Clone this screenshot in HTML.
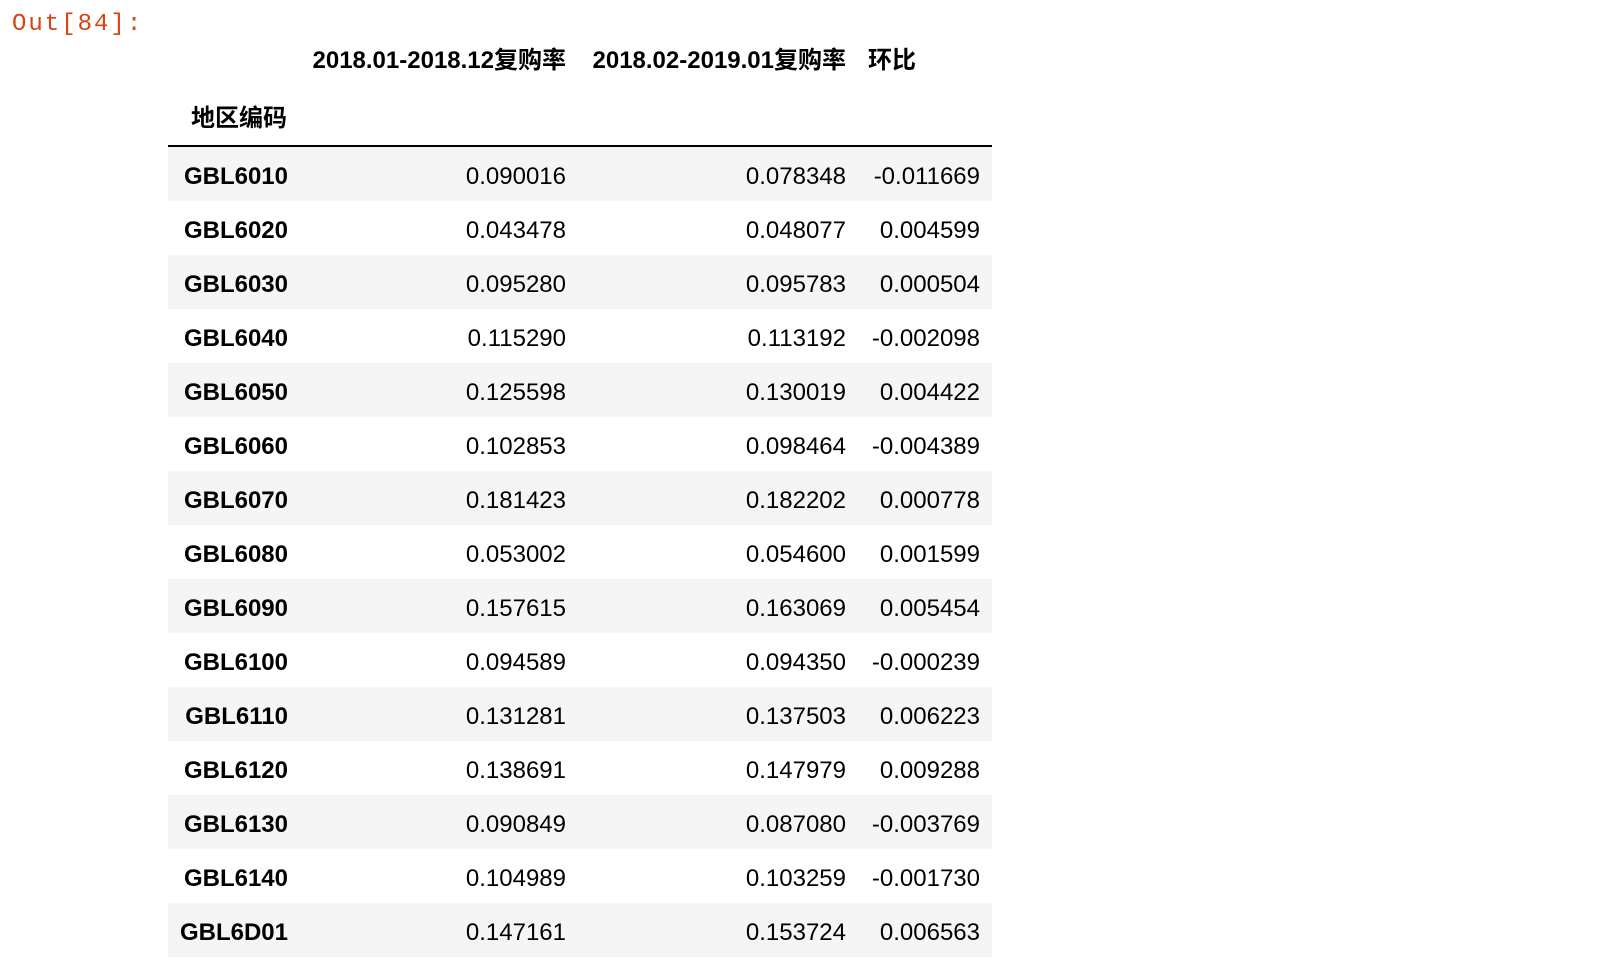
<!DOCTYPE html>
<html><head><meta charset="utf-8"><style>
body{margin:0;width:1600px;height:968px;background:#fff;position:relative;overflow:hidden;font-family:"Liberation Sans","Noto Sans CJK SC",sans-serif;font-size:24px;color:#000}
.out{position:absolute;left:12px;top:11px;line-height:28px;font-family:"Liberation Mono",monospace;color:#d84315;font-size:24px;letter-spacing:2px}
.r{position:absolute;left:168px;width:824px;height:54px}
.g{background:#f5f5f5}
.c{position:absolute;line-height:54px;white-space:nowrap;text-align:right}
.h{font-weight:bold}
</style></head><body>
<div class="out">Out[84]:</div>
<div class="c h" style="right:1034px;top:34px">2018.01-2018.12复购率</div>
<div class="c h" style="right:754px;top:34px">2018.02-2019.01复购率</div>
<div class="c h" style="right:684px;top:34px">环比</div>
<div class="c h" style="right:1313px;top:92px">地区编码</div>
<div style="position:absolute;left:168px;top:145px;width:824px;height:2px;background:#000"></div>
<div id="t"></div>
<script>
var d=[["GBL6010","0.090016","0.078348","-0.011669"],["GBL6020","0.043478","0.048077","0.004599"],["GBL6030","0.095280","0.095783","0.000504"],["GBL6040","0.115290","0.113192","-0.002098"],["GBL6050","0.125598","0.130019","0.004422"],["GBL6060","0.102853","0.098464","-0.004389"],["GBL6070","0.181423","0.182202","0.000778"],["GBL6080","0.053002","0.054600","0.001599"],["GBL6090","0.157615","0.163069","0.005454"],["GBL6100","0.094589","0.094350","-0.000239"],["GBL6110","0.131281","0.137503","0.006223"],["GBL6120","0.138691","0.147979","0.009288"],["GBL6130","0.090849","0.087080","-0.003769"],["GBL6140","0.104989","0.103259","-0.001730"],["GBL6D01","0.147161","0.153724","0.006563"]];
var h="";
d.forEach(function(r,i){var t=147+i*54,u=t+3;
h+='<div class="r'+(i%2==0?' g':'')+'" style="top:'+t+'px"></div>';
h+='<div class="c h" style="right:1312px;top:'+u+'px">'+r[0]+'</div>';
h+='<div class="c" style="right:1034px;top:'+u+'px">'+r[1]+'</div>';
h+='<div class="c" style="right:754px;top:'+u+'px">'+r[2]+'</div>';
h+='<div class="c" style="right:620px;top:'+u+'px">'+r[3]+'</div>';});
document.getElementById("t").innerHTML=h;
</script>
</body></html>
